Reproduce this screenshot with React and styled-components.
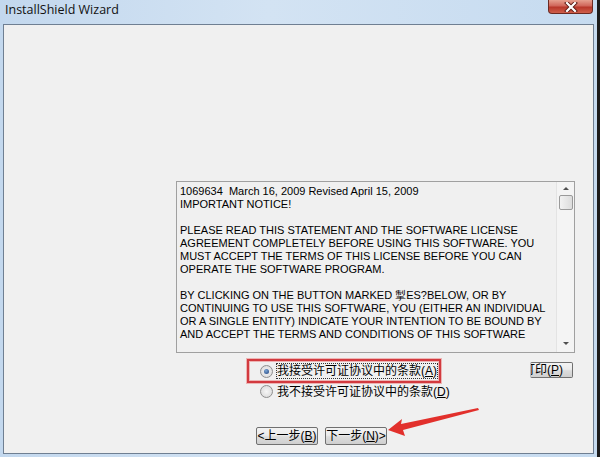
import React from 'react';
import styled, { createGlobalStyle } from 'styled-components';

const GlobalStyle = createGlobalStyle`
  html, body {
    margin: 0;
    padding: 0;
    width: 600px;
    height: 457px;
    overflow: hidden;
    background: #c9dcf0;
  }
`;

const Window = styled.div`
  position: relative;
  width: 600px;
  height: 457px;
  display: flex;
  flex-direction: column;
  background: linear-gradient(90deg, #c3d8ee 0%, #d3e3f3 45%, #c6dbf0 100%);
  box-sizing: border-box;
  border-right: 3px solid #1c1c1c;
`;

const TitleBar = styled.div`
  height: 24px;
  display: flex;
  justify-content: space-between;
  align-items: flex-start;
  padding-left: 5px;
  padding-right: 3px;
`;

const Title = styled.div`
  font-family: "Open Sans", "Noto Sans", sans-serif;
  font-size: 12.5px;
  color: #111;
  line-height: 19px;
`;

const CloseButton = styled.div`
  width: 45px;
  height: 14px;
  margin-right: 1px;
  box-sizing: border-box;
  border: 1px solid #6b2a22;
  border-top: none;
  border-radius: 0 0 4px 4px;
  background: linear-gradient(#e6a08f 0%, #d0665a 45%, #b8372a 55%, #cf5f4b 100%);
  display: flex;
  align-items: center;
  justify-content: center;
`;

const Client = styled.div`
  flex: 1;
  margin: 0 3px 3px 3px;
  border: 1px solid #6f7f92;
  background: #f0f0f0;
  display: flex;
  flex-direction: column;
  padding-left: 172px;
`;

const LicenseBox = styled.div`
  margin-top: 156px;
  width: 399px;
  height: 172px;
  box-sizing: border-box;
  border: 1px solid #a0a0a0;
  background: #f0f0f0;
  display: flex;
`;

const LicenseText = styled.div`
  flex: 1;
  padding: 3px 0 0 3px;
  font-family: "Liberation Sans", Arial, sans-serif;
  font-size: 11px;
  line-height: 13px;
  color: #000;
  white-space: pre;
  overflow: hidden;
`;

const ScrollBar = styled.div`
  width: 17px;
  border-left: 1px solid #e3e3e3;
  background: #f4f4f4;
  display: flex;
  flex-direction: column;
  align-items: center;
  padding-top: 5px;
`;

const Thumb = styled.div`
  width: 14px;
  height: 15px;
  margin-top: 5px;
  box-sizing: border-box;
  border: 1px solid #9a9a9a;
  border-radius: 2px;
  background: linear-gradient(90deg, #f2f2f2, #dcdcdc);
`;

const Triangle = styled.div`
  width: 0;
  height: 0;
  border-left: 3px solid transparent;
  border-right: 3px solid transparent;
  ${p => (p.$down ? 'border-top: 3px solid #505050;' : 'border-bottom: 3px solid #505050;')}
  ${p => (p.$down ? 'margin-top: auto; margin-bottom: 7px;' : '')}
`;

const OptionsRow = styled.div`
  display: flex;
  align-items: flex-start;
  margin-top: 6px;
  margin-left: 71px;
`;

const OptionGroup = styled.div`
  display: flex;
  flex-direction: column;
`;

const Option = styled.div`
  display: flex;
  align-items: center;
  box-sizing: border-box;
  height: ${p => (p.$boxed ? '24px' : '15px')};
  padding: 0 2px 0 11px;
  border: 2px solid ${p => (p.$boxed ? '#d23a3f' : 'transparent')};
  box-shadow: ${p => (p.$boxed ? '0 0 0 1px rgba(235,140,140,0.6), inset 0 0 0 1px rgba(235,140,140,0.6)' : 'none')};
  margin-top: ${p => (p.$boxed ? '0' : '1px')};
  align-self: flex-start;
`;

const Radio = styled.span`
  width: 13px;
  height: 13px;
  box-sizing: border-box;
  border-radius: 50%;
  border: 1px solid #8f8f8f;
  background: radial-gradient(circle, #f6f6f6 0%, #d6d6d6 100%);
  display: flex;
  align-items: center;
  justify-content: center;
  margin-right: 4px;
  &::after {
    content: '';
    width: 5px;
    height: 5px;
    border-radius: 50%;
    background: ${p => (p.$checked ? 'radial-gradient(circle at 40% 35%, #7aa6d6, #20407a)' : 'transparent')};
  }
`;

const OptionLabel = styled.span`
  font-family: "Liberation Sans", "Noto Sans CJK SC", sans-serif;
  font-size: 12px;
  line-height: 14px;
  color: #000;
  outline: ${p => (p.$focused ? '1px dotted #333' : 'none')};
  white-space: nowrap;
`;

const Button = styled.div`
  height: 18px;
  box-sizing: border-box;
  border: 1px solid #707070;
  border-radius: 2px;
  background: linear-gradient(#f3f3f3 0%, #ebebeb 45%, #dddddd 55%, #cfcfcf 100%);
  font-family: "Liberation Sans", "Noto Sans CJK SC", sans-serif;
  font-size: 12px;
  line-height: 16px;
  color: #000;
  display: flex;
  align-items: center;
  justify-content: center;
  white-space: nowrap;
  overflow: hidden;
  width: ${p => p.$w}px;
`;

const PrintButton = styled(Button)`
  margin-left: auto;
  margin-right: 20px;
  margin-top: 3px;
  height: 16px;
  justify-content: flex-start;
  border-left-color: #b8b8b8;
`;

const Clipped = styled.span`
  margin-left: -8px;
`;

const NavRow = styled.div`
  display: flex;
  gap: 7px;
  margin-top: 28px;
  margin-left: 80px;
`;

const Arrow = styled.svg`
  position: absolute;
  left: 385px;
  top: 400px;
  pointer-events: none;
`;

export default function App() {
  const text = [
    '1069634  March 16, 2009 Revised April 15, 2009',
    'IMPORTANT NOTICE!',
    '',
    'PLEASE READ THIS STATEMENT AND THE SOFTWARE LICENSE',
    'AGREEMENT COMPLETELY BEFORE USING THIS SOFTWARE. YOU',
    'MUST ACCEPT THE TERMS OF THIS LICENSE BEFORE YOU CAN',
    'OPERATE THE SOFTWARE PROGRAM.',
    '',
    'BY CLICKING ON THE BUTTON MARKED 掣ES?BELOW, OR BY',
    'CONTINUING TO USE THIS SOFTWARE, YOU (EITHER AN INDIVIDUAL',
    'OR A SINGLE ENTITY) INDICATE YOUR INTENTION TO BE BOUND BY',
    'AND ACCEPT THE TERMS AND CONDITIONS OF THIS SOFTWARE',
  ].join('\n');

  return (
    <>
      <GlobalStyle />
      <Window>
        <TitleBar>
          <Title>InstallShield Wizard</Title>
          <CloseButton>
            <svg width="14" height="10" viewBox="0 0 14 10">
              <path d="M3 1 L11 9 M11 1 L3 9" stroke="#5a1a14" strokeWidth="4" strokeLinecap="square" />
              <path d="M3 1 L11 9 M11 1 L3 9" stroke="#ffffff" strokeWidth="2.2" strokeLinecap="square" />
            </svg>
          </CloseButton>
        </TitleBar>
        <Client>
          <LicenseBox>
            <LicenseText>{text}</LicenseText>
            <ScrollBar>
              <Triangle />
              <Thumb />
              <Triangle $down />
            </ScrollBar>
          </LicenseBox>
          <OptionsRow>
            <OptionGroup>
              <Option $boxed>
                <Radio $checked />
                <OptionLabel $focused>我接受许可证协议中的条款(<u>A</u>)</OptionLabel>
              </Option>
              <Option>
                <Radio />
                <OptionLabel>我不接受许可证协议中的条款(<u>D</u>)</OptionLabel>
              </Option>
            </OptionGroup>
            <PrintButton $w={43}><Clipped>打印(<u>P</u>)</Clipped></PrintButton>
          </OptionsRow>
          <NavRow>
            <Button $w={62}>&lt;上一步(<u>B</u>)</Button>
            <Button $w={62}>下一步(<u>N</u>)&gt;</Button>
          </NavRow>
        </Client>
        <Arrow width="100" height="40" viewBox="0 0 100 40">
          <path d="M3 30 L17 19 L16 24 L93 8 L94 10 L18 30 L20 36 Z" fill="#e2302c" />
        </Arrow>
      </Window>
    </>
  );
}
